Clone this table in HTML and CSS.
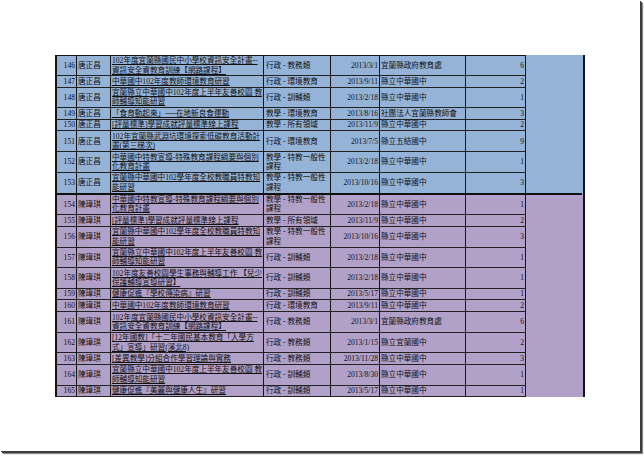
FILE: index.html
```html
<!DOCTYPE html>
<html lang="zh-Hant">
<head>
<meta charset="utf-8">
<title>研習時數</title>
<link rel="stylesheet" href="styles.css">
</head>
<body>
<div class="frame">
  <div class="sheet">
    <div class="row d blue first"><div class="c n">146</div><div class="c nm">唐正昌</div><div class="c t"><span>102年度宜蘭縣國民中小學校資訊安全計畫--<br>資訊安全資教育訓練【網路課程】</span></div><div class="c k">行政 - 教務類</div><div class="c dt">2013/3/1</div><div class="c o">宜蘭縣政府教育處</div><div class="c h">6</div><div class="x"></div></div>
    <div class="row s blue"><div class="c n">147</div><div class="c nm">唐正昌</div><div class="c t"><span>中華國中102年度教師環境教育研習</span></div><div class="c k">行政 - 環境教育</div><div class="c dt">2013/9/11</div><div class="c o">縣立中華國中</div><div class="c h">2</div><div class="x"></div></div>
    <div class="row d blue"><div class="c n">148</div><div class="c nm">唐正昌</div><div class="c t"><span>宜蘭縣立中華國中102年度上半年友善校園 教<br>師輔導知能研習</span></div><div class="c k">行政 - 訓輔類</div><div class="c dt">2013/2/18</div><div class="c o">縣立中華國中</div><div class="c h">1</div><div class="x"></div></div>
    <div class="row s blue"><div class="c n">149</div><div class="c nm">唐正昌</div><div class="c t"><span>「食育動起來」──在地新良食運動</span></div><div class="c k">教學 - 環境教育</div><div class="c dt">2013/8/16</div><div class="c o">社團法人宜蘭縣教師會</div><div class="c h">3</div><div class="x"></div></div>
    <div class="row s blue"><div class="c n">150</div><div class="c nm">唐正昌</div><div class="c t"><span>[評量標準]學習成就評量標準線上課程</span></div><div class="c k">教學 - 所有領域</div><div class="c dt">2013/11/9</div><div class="c o">縣立中華國中</div><div class="c h">2</div><div class="x"></div></div>
    <div class="row d blue"><div class="c n">151</div><div class="c nm">唐正昌</div><div class="c t"><span>102年宜蘭縣武淵坑環境探索低碳教育活動計<br>畫(第三梯次)</span></div><div class="c k">行政 - 環境教育</div><div class="c dt">2013/7/5</div><div class="c o">縣立五結國中</div><div class="c h">9</div><div class="x"></div></div>
    <div class="row d blue"><div class="c n">152</div><div class="c nm">唐正昌</div><div class="c t"><span>中華國中特教宣導-特殊教育課程綱要與個別<br>化教育計畫</span></div><div class="c k">教學 - 特教一般性<br>課程</div><div class="c dt">2013/2/18</div><div class="c o">縣立中華國中</div><div class="c h">1</div><div class="x"></div></div>
    <div class="row d blue end"><div class="c n">153</div><div class="c nm">唐正昌</div><div class="c t"><span>宜蘭縣中華國中102學年度全校教職員特教知<br>能研習</span></div><div class="c k">教學 - 特教一般性<br>課程</div><div class="c dt">2013/10/16</div><div class="c o">縣立中華國中</div><div class="c h">3</div><div class="x"></div></div>
    <div class="row d purple"><div class="c n">154</div><div class="c nm">陳瑋琪</div><div class="c t"><span>中華國中特教宣導-特殊教育課程綱要與個別<br>化教育計畫</span></div><div class="c k">教學 - 特教一般性<br>課程</div><div class="c dt">2013/2/18</div><div class="c o">縣立中華國中</div><div class="c h">1</div><div class="x"></div></div>
    <div class="row s purple"><div class="c n">155</div><div class="c nm">陳瑋琪</div><div class="c t"><span>[評量標準]學習成就評量標準線上課程</span></div><div class="c k">教學 - 所有領域</div><div class="c dt">2013/11/9</div><div class="c o">縣立中華國中</div><div class="c h">2</div><div class="x"></div></div>
    <div class="row d purple"><div class="c n">156</div><div class="c nm">陳瑋琪</div><div class="c t"><span>宜蘭縣中華國中102學年度全校教職員特教知<br>能研習</span></div><div class="c k">教學 - 特教一般性<br>課程</div><div class="c dt">2013/10/16</div><div class="c o">縣立中華國中</div><div class="c h">3</div><div class="x"></div></div>
    <div class="row d purple"><div class="c n">157</div><div class="c nm">陳瑋琪</div><div class="c t"><span>宜蘭縣立中華國中102年度上半年友善校園 教<br>師輔導知能研習</span></div><div class="c k">行政 - 訓輔類</div><div class="c dt">2013/2/18</div><div class="c o">縣立中華國中</div><div class="c h">1</div><div class="x"></div></div>
    <div class="row d purple"><div class="c n">158</div><div class="c nm">陳瑋琪</div><div class="c t"><span>102年度友善校園學生事務與輔導工作 【兒少<br>保護輔導宣導研習】</span></div><div class="c k">行政 - 訓輔類</div><div class="c dt">2013/2/18</div><div class="c o">縣立中華國中</div><div class="c h">1</div><div class="x"></div></div>
    <div class="row s purple"><div class="c n">159</div><div class="c nm">陳瑋琪</div><div class="c t"><span>健康促進『學校傳染病』研習</span></div><div class="c k">行政 - 訓輔類</div><div class="c dt">2013/5/17</div><div class="c o">縣立中華國中</div><div class="c h">1</div><div class="x"></div></div>
    <div class="row s purple"><div class="c n">160</div><div class="c nm">陳瑋琪</div><div class="c t"><span>中華國中102年度教師環境教育研習</span></div><div class="c k">行政 - 環境教育</div><div class="c dt">2013/9/11</div><div class="c o">縣立中華國中</div><div class="c h">2</div><div class="x"></div></div>
    <div class="row d purple"><div class="c n">161</div><div class="c nm">陳瑋琪</div><div class="c t"><span>102年度宜蘭縣國民中小學校資訊安全計畫--<br>資訊安全資教育訓練【網路課程】</span></div><div class="c k">行政 - 教務類</div><div class="c dt">2013/3/1</div><div class="c o">宜蘭縣政府教育處</div><div class="c h">6</div><div class="x"></div></div>
    <div class="row d purple"><div class="c n">162</div><div class="c nm">陳瑋琪</div><div class="c t"><span>[12年國教]「十二年國民基本教育「入學方<br>式」宣導」研習(溪北8)</span></div><div class="c k">行政 - 教務類</div><div class="c dt">2013/1/15</div><div class="c o">縣立宜蘭國中</div><div class="c h">2</div><div class="x"></div></div>
    <div class="row s purple"><div class="c n">163</div><div class="c nm">陳瑋琪</div><div class="c t"><span>[差異教學]分組合作學習理論與實務</span></div><div class="c k">行政 - 教務類</div><div class="c dt">2013/11/28</div><div class="c o">縣立中華國中</div><div class="c h">3</div><div class="x"></div></div>
    <div class="row d purple"><div class="c n">164</div><div class="c nm">陳瑋琪</div><div class="c t"><span>宜蘭縣立中華國中102年度上半年友善校園 教<br>師輔導知能研習</span></div><div class="c k">行政 - 訓輔類</div><div class="c dt">2013/8/30</div><div class="c o">縣立中華國中</div><div class="c h">1</div><div class="x"></div></div>
    <div class="row s purple"><div class="c n">165</div><div class="c nm">陳瑋琪</div><div class="c t"><span>健康促進『美麗與健康人生』研習</span></div><div class="c k">行政 - 訓輔類</div><div class="c dt">2013/5/17</div><div class="c o">縣立中華國中</div><div class="c h">1</div><div class="x"></div></div>
  </div>
</div>
</body>
</html>
```
FILE: styles.css
```css
* { box-sizing: border-box; }
html, body { margin: 0; padding: 0; background: #fff; }
body {
  width: 644px;
  height: 456px;
  overflow: hidden;
  font-family: "Liberation Serif", "Noto Sans CJK TC", serif;
  color: #111;
}
.frame {
  width: 640px;
  height: 451px;
  background: #fff;
  padding: 55px 0 0 55px;
  box-shadow: 1px 1px 0 #3c3c3c, 2px 2px 0 #3c3c3c, 3px 3px 1px #8a8a8a;
}
.sheet {
  width: 530px;
  border-left: 2px solid #141414;
  border-right: 2px solid #141414;
  font-size: 7.6px;
  line-height: 9.4px;
}
.row { display: flex; height: 11.6px; }
.row.d { height: 20.7px; }
.row.first { height: 21px; }
.row.end { height: 21.7px; }
.blue { background: #95b3d7; }
.purple { background: #b1a0c7; }
.c {
  display: flex;
  align-items: center;
  white-space: nowrap;
  overflow: hidden;
  border-right: 1px solid #161616;
  border-bottom: 1px solid #222;
}
.first .c { border-top: 1px solid #161616; }
.end .c, .end .x { border-bottom: 2px solid #111; }
.x { width: 56px; flex: none; }
.n { width: 20px; justify-content: flex-end; padding-right: 1px; }
.nm { width: 34px; padding-left: 1px; }
.t { width: 153px; padding-left: 1px; }
.t span { text-decoration: underline; text-decoration-thickness: 0.5px; text-underline-offset: 0.5px; }
.k { width: 67px; padding-left: 2px; }
.dt { width: 49px; justify-content: flex-end; padding-right: 1px; }
.o { width: 86px; padding-left: 1px; }
.h { width: 60px; justify-content: flex-end; padding-right: 1px; }
```
